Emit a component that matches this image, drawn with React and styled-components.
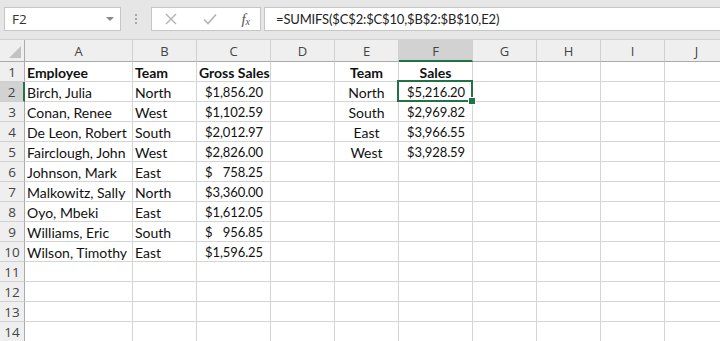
import React from "react";
import styled, { createGlobalStyle } from "styled-components";

const GlobalStyle = createGlobalStyle`
  html, body {
    margin: 0;
    padding: 0;
    background: #ffffff;
    overflow: hidden;
  }
`;

const COLS = [
  { key: "A", width: 108 },
  { key: "B", width: 64 },
  { key: "C", width: 74 },
  { key: "D", width: 64 },
  { key: "E", width: 64 },
  { key: "F", width: 74 },
  { key: "G", width: 64 },
  { key: "H", width: 64 },
  { key: "I", width: 64 },
  { key: "J", width: 64 }
];

const employees = [
  ["Birch, Julia", "North", "1,856.20"],
  ["Conan, Renee", "West", "1,102.59"],
  ["De Leon, Robert", "South", "2,012.97"],
  ["Fairclough, John", "West", "2,826.00"],
  ["Johnson, Mark", "East", "758.25"],
  ["Malkowitz, Sally", "North", "3,360.00"],
  ["Oyo, Mbeki", "East", "1,612.05"],
  ["Williams, Eric", "South", "956.85"],
  ["Wilson, Timothy", "East", "1,596.25"]
];

const totals = [
  ["North", "5,216.20"],
  ["South", "2,969.82"],
  ["East", "3,966.55"],
  ["West", "3,928.59"]
];

function buildCells(row) {
  // row 1 is the header row of both tables
  if (row === 1) {
    return {
      A: { text: "Employee", bold: true },
      B: { text: "Team", bold: true },
      C: { text: "Gross Sales", bold: true },
      E: { text: "Team", bold: true, align: "center" },
      F: { text: "Sales", bold: true, align: "center" }
    };
  }
  const cells = {};
  const emp = employees[row - 2];
  if (emp) {
    cells.A = { text: emp[0] };
    cells.B = { text: emp[1] };
    cells.C = { money: emp[2] };
  }
  const tot = totals[row - 2];
  if (tot) {
    cells.E = { text: tot[0], align: "center" };
    cells.F = { money: tot[1] };
  }
  return cells;
}

export default function App() {
  const rows = Array.from({ length: 14 }, (_, i) => i + 1);

  return (
    <Screen>
      <GlobalStyle />
      <Toolbar>
        <NameBox>
          <span>F2</span>
          <DropArrow />
        </NameBox>
        <Grip>
          <i />
          <i />
          <i />
        </Grip>
        <FormulaButtons>
          <svg width="14" height="14" viewBox="0 0 14 14">
            <path d="M2 2 L12 12 M12 2 L2 12" stroke="#b3b3b3" strokeWidth="1.4" fill="none" />
          </svg>
          <svg width="16" height="14" viewBox="0 0 16 14">
            <path d="M2 7.5 L6 11.5 L14 2.5" stroke="#b3b3b3" strokeWidth="1.6" fill="none" />
          </svg>
          <FxLabel>
            f<sub>x</sub>
          </FxLabel>
        </FormulaButtons>
        <FormulaInput>=SUMIFS($C$2:$C$10,$B$2:$B$10,E2)</FormulaInput>
      </Toolbar>

      <Sheet>
        <Corner>
          <svg width="12" height="12" viewBox="0 0 12 12">
            <path d="M12 0 L12 12 L0 12 Z" fill="#c2c2c2" />
          </svg>
        </Corner>
        {COLS.map(c => (
          <ColHeader key={c.key} $selected={c.key === "F"}>
            {c.key}
          </ColHeader>
        ))}

        {rows.map(r => {
          const cells = buildCells(r);
          return (
            <React.Fragment key={r}>
              <RowHeader $selected={r === 2}>{r}</RowHeader>
              {COLS.map(c => {
                const cell = cells[c.key];
                const active = c.key === "F" && r === 2;
                return (
                  <Cell
                    key={c.key}
                    $bold={cell && cell.bold}
                    $align={cell && cell.align}
                    $money={cell && cell.money}
                    $active={active}
                  >
                    {cell && cell.money ? (
                      <>
                        <span>$</span>
                        <span>{cell.money}</span>
                      </>
                    ) : (
                      cell && cell.text
                    )}
                    {active && <FillHandle />}
                  </Cell>
                );
              })}
            </React.Fragment>
          );
        })}
      </Sheet>
    </Screen>
  );
}

const Screen = styled.div`
  width: 720px;
  height: 341px;
  overflow: hidden;
  background: #ffffff;
`;

const Toolbar = styled.div`
  height: 40px;
  box-sizing: border-box;
  padding: 7px 0 8px 4px;
  background: #e6e6e6;
  display: flex;
  align-items: stretch;
  border-bottom: 1px solid #d0d0d0;
  font-family: "Open Sans", "Noto Sans", sans-serif;
`;

const Box = styled.div`
  background: #ffffff;
  border: 1px solid #c6c6c6;
  box-sizing: border-box;
  display: flex;
  align-items: center;
`;

const NameBox = styled(Box)`
  width: 117px;
  padding: 0 6px 0 7px;
  justify-content: space-between;
  font-size: 13.5px;
  color: #333;
`;

const DropArrow = styled.span`
  width: 0;
  height: 0;
  border-left: 4px solid transparent;
  border-right: 4px solid transparent;
  border-top: 4px solid #8a8a8a;
`;

const Grip = styled.div`
  width: 30px;
  display: flex;
  flex-direction: column;
  align-items: center;
  justify-content: center;
  gap: 2px;

  i {
    width: 2px;
    height: 2px;
    background: #a8a8a8;
  }
`;

const FormulaButtons = styled(Box)`
  width: 110px;
  padding: 0 10px 0 12px;
  justify-content: space-between;
`;

const FxLabel = styled.span`
  font-family: "Liberation Serif", serif;
  font-style: italic;
  font-size: 15px;
  color: #555;
  line-height: 1;

  sub {
    font-size: 10px;
    vertical-align: -1px;
  }
`;

const FormulaInput = styled(Box)`
  flex: 1;
  margin-left: 3px;
  padding-left: 11px;
  border-right: none;
  font-family: "Lato", "Open Sans", sans-serif;
  font-size: 13px;
  letter-spacing: -0.15px;
  color: #222;
`;

const Sheet = styled.div`
  display: grid;
  grid-template-columns: 25px ${COLS.map(c => c.width + "px").join(" ")};
  grid-template-rows: 22px repeat(14, 20px);
  width: max-content;
`;

const HeaderBase = styled.div`
  background: #efefef;
  box-sizing: border-box;
  border-right: 1px solid #d0d0d0;
  border-bottom: 1px solid #ababab;
  display: flex;
  align-items: center;
  justify-content: center;
  font-family: "Open Sans", "Noto Sans", sans-serif;
  font-size: 13px;
  color: #444;
`;

const Corner = styled(HeaderBase)`
  border-right: 1px solid #ababab;
  justify-content: flex-end;
  align-items: flex-end;
  padding: 0 3px 3px 0;
`;

const ColHeader = styled(HeaderBase)`
  padding-top: 1px;
  background: ${p => (p.$selected ? "#d2d2d2" : "#efefef")};
  border-bottom: ${p => (p.$selected ? "2px solid #217346" : "1px solid #ababab")};
`;

const RowHeader = styled(HeaderBase)`
  border-bottom: 1px solid #d0d0d0;
  border-right: ${p => (p.$selected ? "2px solid #217346" : "1px solid #ababab")};
  background: ${p => (p.$selected ? "#d2d2d2" : "#efefef")};
  font-size: 13.5px;
`;

const Cell = styled.div`
  position: relative;
  box-sizing: border-box;
  border-right: 1px solid #d4d4d4;
  border-bottom: 1px solid #d4d4d4;
  display: flex;
  align-items: center;
  justify-content: ${p =>
    p.$money ? "space-between" : p.$align === "center" ? "center" : "flex-start"};
  padding: ${p => (p.$money ? "1px 7px 0 8px" : "1px 2px 0 2px")};
  font-family: "Lato", "Open Sans", sans-serif;
  font-size: ${p => (p.$money ? "13px" : "14px")};
  letter-spacing: ${p => (p.$money ? "-0.1px" : "0")};
  font-weight: ${p => (p.$bold ? 700 : 400)};
  color: #111;
  white-space: nowrap;

  ${p =>
    p.$active &&
    `
    &::after {
      content: "";
      position: absolute;
      left: -2px;
      top: -2px;
      right: -1px;
      bottom: -1px;
      border: 2px solid #217346;
      pointer-events: none;
    }
  `}
`;

const FillHandle = styled.span`
  position: absolute;
  right: -4px;
  bottom: -4px;
  width: 6px;
  height: 6px;
  background: #217346;
  border: 1px solid #ffffff;
  z-index: 2;
`;
